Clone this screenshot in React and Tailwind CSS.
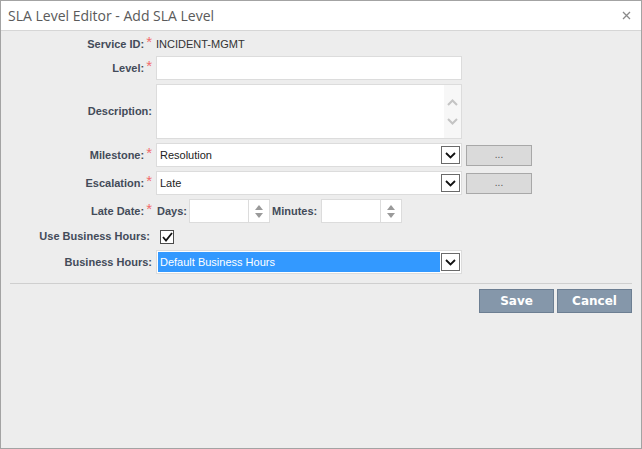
import React from 'react';

const Label = ({ text, star, className = '' }) => (
  <div className={`w-[152px] shrink-0 text-right font-bold text-[11px] text-[#434b59] pr-[1px] ${className}`}>
    {text}
    {star && <span className="text-[#f26b6b] font-normal text-[15px] leading-[11px] ml-[2px] relative top-[-1px]">*</span>}
  </div>
);

const Chevron = () => (
  <svg width="11" height="7" viewBox="0 0 11 7" fill="none">
    <path d="M1 1l4.5 4.5L10 1" stroke="#111" strokeWidth="1.8" />
  </svg>
);

const Select = ({ value, selected }) => (
  <div className="w-[306px] h-[24px] bg-white border border-[#dcdcdc] flex items-center pl-[1px] pr-[1px]">
    <div
      className={`flex-1 h-[20px] flex items-center pl-[2px] text-[11px] ${
        selected ? 'bg-[#3399ff] text-white' : 'text-[#222]'
      }`}
    >
      {value}
    </div>
    <div className="w-[19px] h-[18px] ml-[1px] border border-[#6a6a6a] bg-white flex items-center justify-center">
      <Chevron />
    </div>
  </div>
);

const Spinner = () => (
  <div className="w-[81px] h-[24px] bg-white border border-[#dcdcdc] flex">
    <div className="flex-1" />
    <div className="w-[21px] border-l border-[#dcdcdc] flex flex-col items-center justify-center gap-[3px]">
      <svg width="8" height="5" viewBox="0 0 8 5"><path d="M4 0L8 5H0z" fill="#9a9a9a" /></svg>
      <svg width="8" height="5" viewBox="0 0 8 5"><path d="M0 0h8L4 5z" fill="#9a9a9a" /></svg>
    </div>
  </div>
);

const DotsButton = () => (
  <div className="w-[66px] h-[21px] ml-[4px] bg-[#dadada] border border-[#a8a8a8] flex items-center justify-center text-[10px] text-[#555] pb-[2px]">
    ...
  </div>
);

export default function App() {
  return (
    <div className="w-[642px] h-[449px] border border-[#a3a3a3] bg-[#ededed] flex flex-col font-['Liberation_Sans',Arial,sans-serif]">
      <div className="h-[30px] shrink-0 bg-white border-b border-[#d6d6d6] flex items-center justify-between pl-[7px] pr-[10px]">
        <span className="font-['Open_Sans',sans-serif] text-[14px] text-[#5a5a5a]">SLA Level Editor - Add SLA Level</span>
        <svg width="9" height="9" viewBox="0 0 9 9">
          <path d="M1 1l7 7M8 1l-7 7" stroke="#8a8a8a" strokeWidth="1.3" />
        </svg>
      </div>

      <div className="flex flex-col gap-[4px] pt-[6px]">
        <div className="flex items-center h-[15px]">
          <Label text="Service ID:" star />
          <span className="ml-[3px] text-[11px] text-[#333]">INCIDENT-MGMT</span>
        </div>

        <div className="flex items-center">
          <Label text="Level:" star />
          <div className="ml-[3px] w-[306px] h-[24px] bg-white border border-[#dcdcdc]" />
        </div>

        <div className="flex items-center">
          <Label text="Description:" />
          <div className="ml-[3px] w-[306px] h-[55px] bg-white border border-[#dcdcdc] flex justify-end">
            <div className="w-[17px] bg-[#f7f7f7] flex flex-col items-center justify-center gap-[12px]">
              <svg width="11" height="7" viewBox="0 0 11 7" fill="none"><path d="M1 6l4.5-4.5L10 6" stroke="#c4c4c4" strokeWidth="2" /></svg>
              <svg width="11" height="7" viewBox="0 0 11 7" fill="none"><path d="M1 1l4.5 4.5L10 1" stroke="#c4c4c4" strokeWidth="2" /></svg>
            </div>
          </div>
        </div>

        <div className="flex items-center">
          <Label text="Milestone:" star />
          <div className="ml-[3px] flex items-center">
            <Select value="Resolution" />
            <DotsButton />
          </div>
        </div>

        <div className="flex items-center">
          <Label text="Escalation:" star />
          <div className="ml-[3px] flex items-center">
            <Select value="Late" />
            <DotsButton />
          </div>
        </div>

        <div className="flex items-center">
          <Label text="Late Date:" star />
          <div className="ml-[4px] flex items-center text-[11px] font-bold text-[#434b59]">
            <span className="w-[32px]">Days:</span>
            <Spinner />
            <span className="ml-[2px] w-[49px]">Minutes:</span>
            <Spinner />
          </div>
        </div>

        <div className="flex items-center h-[19px]">
          <Label text="Use Business Hours:" className="pr-[3px]" />
          <div className="ml-[7px] w-[14px] h-[14px] bg-white border border-[#4a4a4a] flex items-center justify-center">
            <svg width="11" height="10" viewBox="0 0 11 10" fill="none">
              <path d="M1 5l3 3.5L10 1" stroke="#111" strokeWidth="1.8" />
            </svg>
          </div>
        </div>

        <div className="flex items-center">
          <Label text="Business Hours:" />
          <div className="ml-[3px]">
            <Select value="Default Business Hours" selected />
          </div>
        </div>
      </div>

      <div className="mx-[9px] mt-[9px] border-t border-[#cfcfcf]" />

      <div className="flex justify-end gap-[3px] pr-[9px] mt-[5px]">
        <button className="w-[75px] h-[24px] bg-[#8597aa] border border-[#6c7e92] text-white font-bold text-[12px] font-['DejaVu_Sans',sans-serif]">
          Save
        </button>
        <button className="w-[75px] h-[24px] bg-[#8597aa] border border-[#6c7e92] text-white font-bold text-[12px] font-['DejaVu_Sans',sans-serif]">
          Cancel
        </button>
      </div>
    </div>
  );
}
